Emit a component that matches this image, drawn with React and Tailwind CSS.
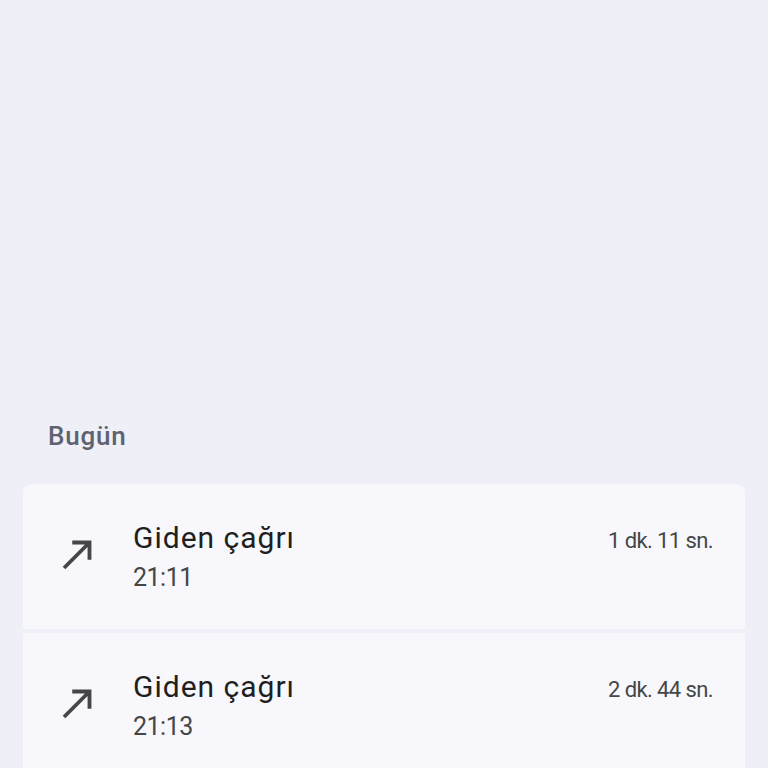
import React from "react";

function CallMade() {
  return (
    <svg viewBox="0 0 24 24" className="w-[46px] h-[46px] text-[#444746]" fill="currentColor">
      <path d="M9 5v2h6.59L4 18.59 5.41 20 17 8.41V15h2V5z" />
    </svg>
  );
}

function Row({ time, dur, rounded }) {
  return (
    <div className={`bg-[#f7f7fc] h-[145px] flex items-center pl-[32px] pr-[32px] ${rounded}`}>
      <div className="w-[46px] shrink-0 mb-[6px]">
        <CallMade />
      </div>
      <div className="ml-[32px] flex-1 flex flex-col">
        <div className="flex items-baseline justify-between">
          <span className="text-[30px] leading-[36px] tracking-[1px] text-[#1f1f1f]">Giden çağrı</span>
          <span className="text-[22px] tracking-[-0.6px] text-[#444746]">{dur}</span>
        </div>
        <span className="text-[25px] leading-[32px] mt-[5px] tracking-[-0.5px] text-[#444746]">{time}</span>
      </div>
    </div>
  );
}

export default function App() {
  return (
    <div className="w-[768px] h-[768px] overflow-hidden bg-[#eeeff7]" style={{ fontFamily: "Roboto, 'Noto Sans', sans-serif" }}>
      <div className="h-[420px]" />
      <div className="pl-[48px] text-[26px] leading-[32px] tracking-[0.8px] text-[#5e6270] font-medium">Bugün</div>
      <div className="mt-[32px] mx-[23px] flex flex-col gap-[4px]">
        <Row time="21:11" dur="1 dk. 11 sn." rounded="rounded-t-[8px] rounded-b-[2px]" />
        <Row time="21:13" dur="2 dk. 44 sn." rounded="rounded-[2px]" />
      </div>
    </div>
  );
}
